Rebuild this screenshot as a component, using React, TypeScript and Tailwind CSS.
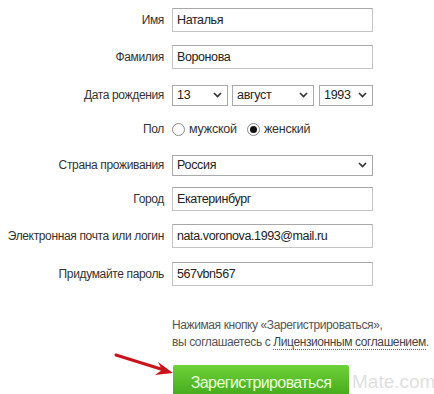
import { ReactNode } from "react";

const font = { fontFamily: '"Liberation Sans", Arial, sans-serif' };

function Chevron() {
  return (
    <svg width="9" height="6" viewBox="0 0 9 6" className="shrink-0">
      <path d="M1 1l3.5 3.5L8 1" fill="none" stroke="#333" strokeWidth="1.6" />
    </svg>
  );
}

function Row({ label, mt, h, children }: { label: string; mt: string; h: string; children: ReactNode }) {
  return (
    <div className={`grid grid-cols-[164px_201px] gap-x-[8px] items-center ${mt} ${h}`}>
      <span className="text-right text-[12px] tracking-[-0.35px] text-[#333] whitespace-nowrap">{label}</span>
      {children}
    </div>
  );
}

function TextInput({ value }: { value: string }) {
  return (
    <div className="h-full border border-[#c4c4c4] border-t-[#a8a8a8] bg-white px-[4px] flex items-center text-[12.5px] tracking-[-0.4px] text-[#222]">
      {value}
    </div>
  );
}

function Select({ value, className }: { value: string; className?: string }) {
  return (
    <div
      className={`h-full border border-[#a9a9a9] bg-white pl-[4px] pr-[5px] flex items-center justify-between text-[12.5px] tracking-[-0.3px] text-[#222] ${className ?? ""}`}
    >
      <span>{value}</span>
      <Chevron />
    </div>
  );
}

function Radio({ checked, label }: { checked?: boolean; label: string }) {
  return (
    <span className="flex items-center gap-[4px]">
      <span className="w-[13px] h-[13px] rounded-full border border-[#8a8a8a] bg-white flex items-center justify-center">
        {checked && <span className="w-[7px] h-[7px] rounded-full bg-[#111]" />}
      </span>
      <span>{label}</span>
    </span>
  );
}

export default function App() {
  return (
    <div className="relative w-[434px] h-[394px] bg-white overflow-hidden" style={font}>
      <div className="flex flex-col">
        <Row label="Имя" mt="mt-[8px]" h="h-[24px]">
          <TextInput value="Наталья" />
        </Row>
        <Row label="Фамилия" mt="mt-[13px]" h="h-[24px]">
          <TextInput value="Воронова" />
        </Row>
        <Row label="Дата рождения" mt="mt-[16px]" h="h-[20px]">
          <div className="flex h-full gap-[4px]">
            <Select value="13" className="w-[56px]" />
            <Select value="август" className="w-[82px]" />
            <Select value="1993" className="w-[54px] ml-[1px]" />
          </div>
        </Row>
        <Row label="Пол" mt="mt-[14px]" h="h-[20px]">
          <div className="flex items-center gap-[10px] text-[12.5px] tracking-[-0.2px] text-[#333]">
            <Radio label="мужской" />
            <Radio checked label="женский" />
          </div>
        </Row>
        <Row label="Страна проживания" mt="mt-[16px]" h="h-[20px]">
          <Select value="Россия" />
        </Row>
        <Row label="Город" mt="mt-[12px]" h="h-[24px]">
          <TextInput value="Екатеринбург" />
        </Row>
        <Row label="Электронная почта или логин" mt="mt-[13px]" h="h-[24px]">
          <TextInput value="nata.voronova.1993@mail.ru" />
        </Row>
        <Row label="Придумайте пароль" mt="mt-[14px]" h="h-[24px]">
          <TextInput value="567vbn567" />
        </Row>

        <div className="ml-[172px] mt-[31px] text-[12px] tracking-[-0.4px] leading-[17px] text-[#555] whitespace-nowrap">
          <p>Нажимая кнопку «Зарегистрироваться»,</p>
          <p>
            вы соглашаетесь с{" "}
            <span className="text-[#444] border-b border-dotted border-[#666]">Лицензионным соглашением</span>.
          </p>
        </div>

        <div className="ml-[173px] mt-[14px] w-[176px] h-[36px] rounded-[2px] bg-gradient-to-b from-[#6ed23a] to-[#3ea414] flex items-center justify-center text-[16px] tracking-[-0.6px] text-[#e9ffd8]">
          Зарегистрироваться
        </div>
      </div>

      {/* watermark */}
      <span className="absolute left-[352px] top-[368px] text-[19px] text-[#e0e0e0]">Mate.com</span>

      {/* red arrow */}
      <svg className="absolute left-0 top-0" width="434" height="394">
        <line x1="116" y1="355" x2="164" y2="370" stroke="#c8141b" strokeWidth="3" strokeLinecap="round" />
        <path d="M173 373 L158 362 L162 370 L155 375 Z" fill="#c8141b" />
      </svg>
    </div>
  );
}
